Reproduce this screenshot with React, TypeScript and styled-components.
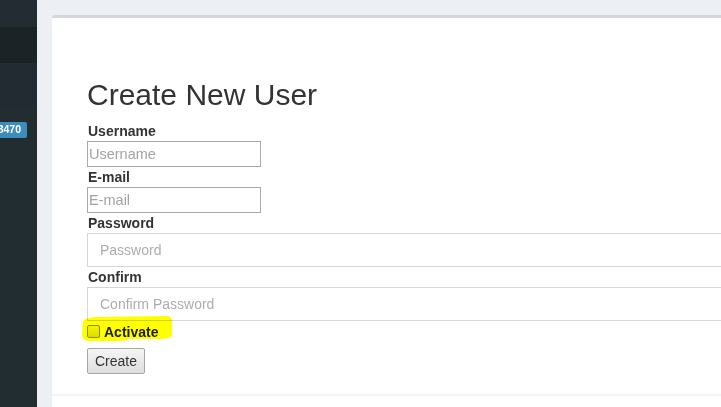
import styled, { createGlobalStyle } from 'styled-components';

const GlobalStyle = createGlobalStyle`
  html, body {
    margin: 0;
    padding: 0;
    background-color: #ecf0f5;
    font-family: 'Liberation Sans', Arial, sans-serif;
    overflow: hidden;
  }
`;

const Shell = styled.div`
  display: flex;
  min-height: 100vh;
`;

const Sidebar = styled.aside`
  flex: none;
  width: 37px;
  background-color: #222d32;
  overflow: hidden;
  display: flex;
  flex-direction: column;
`;

const SideBand = styled.div<{ $height: number; $bg: string }>`
  height: ${(props) => props.$height}px;
  background-color: ${(props) => props.$bg};
`;

const MenuRow = styled.div`
  height: 44px;
  display: flex;
  align-items: center;
  justify-content: flex-end;
  padding-right: 10px;
`;

const Badge = styled.span`
  flex: none;
  white-space: nowrap;
  background-color: #3c8dbc;
  color: #fff;
  font-size: 10.5px;
  font-weight: bold;
  line-height: 1;
  padding: 2px 6px 3px;
  border-radius: 2px;
`;

const Main = styled.main`
  flex: 1;
  min-width: 0;
  padding: 15px 0 0 15px;
  overflow: hidden;
`;

const Box = styled.section`
  width: 800px;
  background-color: #fff;
  border-top: 3px solid #d2d6de;
  border-radius: 3px;
  box-shadow: 0 1px 1px rgba(0, 0, 0, 0.1);
`;

const BoxBody = styled.form`
  padding: 60px 35px 20px;
  display: flex;
  flex-direction: column;
  align-items: flex-start;
`;

const BoxFooter = styled.div`
  border-top: 2px solid #f4f4f4;
  height: 20px;
`;

const Title = styled.h1`
  margin: 0 0 10px;
  font-size: 30px;
  line-height: 33px;
  font-weight: normal;
  color: #333;
`;

const Label = styled.label`
  font-size: 14px;
  line-height: 20px;
  font-weight: bold;
  color: #333;
  padding-left: 1px;
`;

const SmallInput = styled.input`
  box-sizing: border-box;
  width: 174px;
  height: 26px;
  margin: 0;
  padding: 1px 1px;
  border: 1px solid #a9a9a9;
  font-family: inherit;
  font-size: 14.5px;
  color: #333;
  &::placeholder {
    color: #a3a3a3;
  }
`;

const WideInput = styled.input`
  box-sizing: border-box;
  width: 100%;
  height: 34px;
  margin: 0;
  padding: 6px 12px;
  border: 1px solid #d2d6de;
  font-family: inherit;
  font-size: 14px;
  color: #555;
  &::placeholder {
    color: #adadad;
  }
`;

const CheckRow = styled.div`
  position: relative;
  height: 21px;
  display: flex;
  align-items: center;
  gap: 4px;
  font-size: 14px;
  font-weight: bold;
  color: #222;
`;

const Check = styled.input`
  appearance: none;
  box-sizing: border-box;
  width: 13px;
  height: 13px;
  margin: 0;
  border: 1px solid #8a8a8a;
  border-radius: 2px;
  background: linear-gradient(#f4f4f4, #dcdcdc);
`;

const Highlight = styled.svg`
  position: absolute;
  left: -6px;
  top: -6px;
  width: 92px;
  height: 27px;
  mix-blend-mode: multiply;
  pointer-events: none;
`;

const Button = styled.button`
  margin-top: 6px;
  height: 26px;
  padding: 0 7px;
  border: 1px solid #a6a6a6;
  border-radius: 2px;
  background: linear-gradient(#f5f5f5, #dedede);
  font-family: inherit;
  font-size: 14px;
  color: #333;
`;

export default function App() {
  return (
    <>
      <GlobalStyle />
      <Shell>
        <Sidebar>
          <SideBand $height={27} $bg="#232c32" />
          <SideBand $height={36} $bg="#1c2327" />
          <SideBand $height={45} $bg="#222b31" />
          <MenuRow>
            <Badge>13470</Badge>
          </MenuRow>
        </Sidebar>
        <Main>
          <Box>
            <BoxBody onSubmit={(e) => e.preventDefault()}>
              <Title>Create New User</Title>
              <Label>Username</Label>
              <SmallInput placeholder="Username" />
              <Label>E-mail</Label>
              <SmallInput placeholder="E-mail" />
              <Label>Password</Label>
              <WideInput type="password" placeholder="Password" />
              <Label>Confirm</Label>
              <WideInput type="password" placeholder="Confirm Password" />
              <CheckRow>
                <Check type="checkbox" />
                <span>Activate</span>
                <Highlight viewBox="0 0 92 27">
                  <path
                    d="M2,7 Q3,2 19,2 L87,1 Q91,2 91,7 L91,20 Q90,24 79,24 L47,24 Q45,26 37,26 L7,26 Q1,25 1,19 Z"
                    fill="#ffff00"
                  />
                </Highlight>
              </CheckRow>
              <Button type="submit">Create</Button>
            </BoxBody>
            <BoxFooter />
          </Box>
        </Main>
      </Shell>
    </>
  );
}
